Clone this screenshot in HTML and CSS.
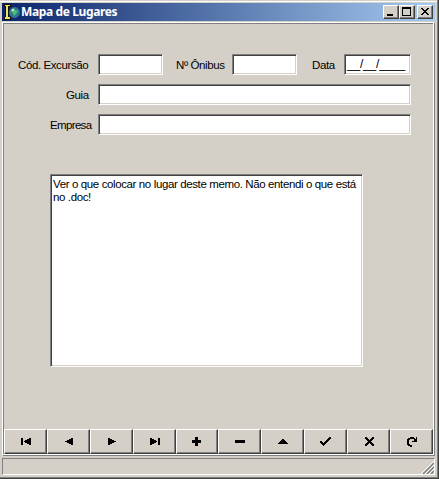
FILE: index.html
```html
<!DOCTYPE html>
<html lang="pt-BR">
<head>
<meta charset="utf-8">
<title>Mapa de Lugares</title>
<link rel="stylesheet" href="styles.css">
</head>
<body>
<div class="window">
  <header class="titlebar">
    <svg class="app-icon" width="17" height="16" viewBox="0 0 17 16">
      <path d="M0 0h7v3H5v10h2v3H0v-3h1V3H0z" fill="#111"/>
      <path d="M1 1h5v1H1zM2 2h2v11H2zM1 13h5v2H1z" fill="#f0e45c"/>
      <circle cx="10.5" cy="8.5" r="5" fill="#287d86" stroke="#3c6f9c"/>
      <path d="M7 6l3-2 1 2 3 1-2 3-2 2-1-3-2-1z" fill="#55b879"/>
      <path d="M8 5h2v2H8z" fill="#c5eee0"/>
    </svg>
    <h1 class="title">Mapa de Lugares</h1>
    <div class="controls">
      <button class="control" aria-label="Minimizar"><svg width="14" height="12" viewBox="0 0 14 12"><path d="M3 8h6v2H3z"/></svg></button>
      <button class="control" aria-label="Maximizar"><svg width="14" height="12" viewBox="0 0 14 12"><path fill-rule="evenodd" d="M2 1h9v9H2zM3 3v6h7V3z"/></svg></button>
      <button class="control close" aria-label="Fechar"><svg width="14" height="12" viewBox="0 0 14 12"><path d="M3 2h2v1h1v1h2V3h1V2h2v1h-1v1H9v1H8v1h1v1h1v1h1v1H9V8H8V7H6v1H5v1H3V8h1V7h1V6h1V5H5V4H4V3H3z"/></svg></button>
    </div>
  </header>
  <main class="panel">
    <form class="form">
      <label class="label code">Cód. Excursão</label><div class="field"></div>
      <label class="label bus">Nº Ônibus</label><div class="field"></div>
      <label class="label date">Data</label><div class="field date-field"><span>__/__/____</span></div>
      <label class="label guide">Guia</label><div class="field wide"></div>
      <label class="label company">Empresa</label><div class="field wide"></div>
    </form>
    <div class="memo"><span class="line">Ver o que colocar no lugar deste memo. Não entendi o que está</span><span class="line">no .doc!</span></div>
    <nav class="navigator">
      <button class="nav"><svg viewBox="0 0 12 12"><path d="M1 2h2v7H1zM11 2v7H9V8H7V7H5V6H4V5h1V4h2V3h2V2z"/></svg></button>
      <button class="nav"><svg viewBox="0 0 12 12"><path d="M10 2v7H8V8H6V7H4V6H2V5h2V4h2V3h2V2z"/></svg></button>
      <button class="nav"><svg viewBox="0 0 12 12"><path d="M2 2v7h2V8h2V7h2V6h2V5H8V4H6V3H4V2z"/></svg></button>
      <button class="nav"><svg viewBox="0 0 12 12"><path d="M1 2v7h2V8h2V7h2V6h1V5H7V4H5V3H3V2zM9 2h2v7H9z"/></svg></button>
      <button class="nav narrow"><svg viewBox="0 0 12 12"><path d="M3 1h3v3h3v3H6v3H3V7H0V4h3z"/></svg></button>
      <button class="nav"><svg viewBox="0 0 12 12"><path d="M1 4h10v3H1z"/></svg></button>
      <button class="nav"><svg viewBox="0 0 12 12"><path d="M5 3h2v1h1v1h1v1h1v1h1v1H1V7h1V6h1V5h1V4h1z"/></svg></button>
      <button class="nav"><svg viewBox="0 0 12 12"><path d="M9 1h2v2h-1v1H9v1H8v1H7v1H6v1H5v1H4v1H3V9H2V8H1V7H0V5h2v1h1v1h1V6h1V5h1V4h1V3h1V2h1z"/></svg></button>
      <button class="nav"><svg viewBox="0 0 12 12"><path d="M2 1h2v1h1v1h1v1h1V3h1V2h1V1h2v2h-1v1H9v1H8v1h1v1h1v1h1v2H9V9H8V8H7V7H6v1H5v1H4v1H2V8h1V7h1V6h1V5H4V4H3V3H2z"/></svg></button>
      <button class="nav"><svg viewBox="0 0 12 12"><path d="M4 1h4v1h1v1h1V1h1v5H6V5h2V3H4v1H3v4h1v1h2v2H4v-1H2V9H1V3h1V2h2z"/></svg></button>
    </nav>
  </main>
  <footer class="status">
    <svg class="grip" width="13" height="13" viewBox="0 0 13 13">
      <path d="M0 13L13 0M4 13l9-9M8 13l5-5" stroke="#fff"/>
      <path d="M2 13L13 2M6 13l7-7M10 13l3-3" stroke="#808080" stroke-width="1.5"/>
    </svg>
  </footer>
</div>
</body>
</html>
```
FILE: styles.css
```css
* { box-sizing: border-box; }
body { margin: 0; overflow: hidden; background: #d4d0c8; }
.window {
  display: flex;
  flex-direction: column;
  width: 439px;
  height: 479px;
  padding: 2px 0 0 2px;
  border-right: 1px solid #404040;
  border-bottom: 1px solid #404040;
  box-shadow: inset -1px -1px #808080, inset 0 1px #d4d0c8, inset 0 2px #fff;
  background: #d4d0c8;
  font: 11.5px "Liberation Sans", Arial, sans-serif;
  color: #000;
}
.titlebar {
  display: flex;
  align-items: center;
  width: 433px;
  height: 18px;
  margin-top: 1px;
  padding: 0 2px;
  background: linear-gradient(90deg, #0a246a, #a6caf0);
}
.app-icon { flex: none; }
.title {
  flex: 1;
  margin: 0;
  font: bold 12px/18px "Noto Sans", Tahoma, sans-serif;
  letter-spacing: -.38px;
  white-space: nowrap;
  color: #fff;
}
.controls { display: flex; }
.control {
  width: 16px;
  height: 14px;
  padding: 0;
  border: 1px solid;
  border-color: #fff #404040 #404040 #fff;
  background: #d4d0c8;
  box-shadow: inset -1px -1px #808080;
}
.control svg { display: block; }
.close { margin-left: 2px; }
.panel {
  display: flex;
  flex-direction: column;
  width: 432px;
  height: 433px;
  margin-top: 1px;
  border: 1px solid #fff;
  box-shadow: inset 1px 1px #808080, 1px 1px #808080;
}
.form {
  display: grid;
  grid-template-columns: 80px 65px 69px 65px 47px 67px;
  row-gap: 9px;
  margin: 31px 0 0 15px;
}
.label { padding-top: 1px; line-height: 21px; height: 21px; letter-spacing: -.4px; white-space: nowrap; }
.bus { padding-left: 13px; }
.date { padding-left: 15px; }
.guide { padding-left: 48px; }
.company { padding-left: 32px; letter-spacing: -.65px; }
.field, .memo {
  border: 1px solid;
  border-color: #808080 #fff #fff #808080;
  box-shadow: inset 1px 1px #404040, inset -1px -1px #d4d0c8;
  background: #fff;
}
.field { height: 21px; }
.wide { grid-column: 2 / -1; }
.date-field { padding-left: 2px; font-size: 12px; line-height: 18px; letter-spacing: -.2px; }
.memo {
  width: 313px;
  height: 193px;
  margin: 39px 0 0 47px;
  padding: 3px 2px 2px;
  line-height: 13px;
}
.line { display: block; letter-spacing: -.38px; white-space: nowrap; }
.navigator { display: flex; margin: 62px 0 0 1px; }
.nav {
  display: flex;
  align-items: flex-start;
  flex: none;
  width: 43px;
  height: 25px;
  padding: 6px 0 0 15px;
  border: 1px solid;
  border-color: #fff #404040 #404040 #fff;
  box-shadow: inset -1px -1px #808080;
  background: #d4d0c8;
}
.narrow { width: 42px; }
.nav svg { flex: none; width: 12px; height: 12px; shape-rendering: crispEdges; }
.status {
  display: flex;
  align-items: flex-end;
  justify-content: flex-end;
  width: 433px;
  height: 17px;
  margin-top: 3px;
  border: 1px solid;
  border-color: #808080 #fff #fff #808080;
}
```
